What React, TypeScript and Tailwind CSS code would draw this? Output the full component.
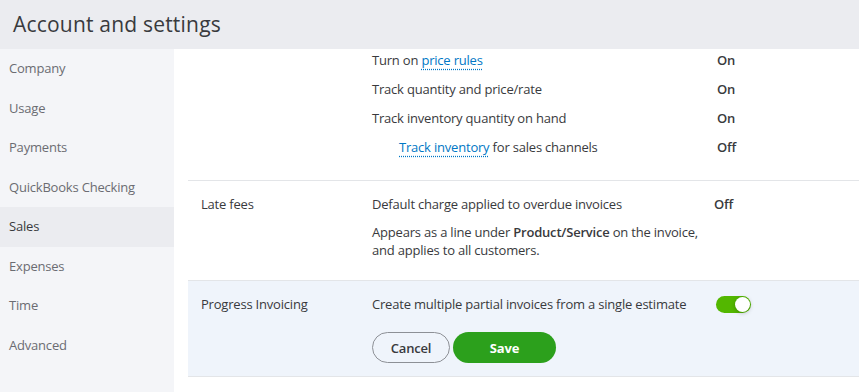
import { useState } from "react";

const navItems = [
  "Company",
  "Usage",
  "Payments",
  "QuickBooks Checking",
  "Sales",
  "Expenses",
  "Time",
  "Advanced",
];

function Link({ children }: { children: React.ReactNode }) {
  return (
    <span className="text-[#0077c5] underline decoration-dotted decoration-[#0077c5] underline-offset-[4px]">
      {children}
    </span>
  );
}

function Toggle({ on, onChange }: { on: boolean; onChange: () => void }) {
  return (
    <button
      onClick={onChange}
      className={`relative h-[17px] w-[35px] rounded-full ${on ? "bg-[#53b700]" : "bg-[#babec5]"}`}
    >
      <span
        className={`absolute top-[1px] h-[15px] w-[15px] rounded-full bg-white shadow-[0_1px_4px_rgba(0,0,0,0.25)] ${on ? "right-[1px]" : "left-[1px]"}`}
      />
    </button>
  );
}

export default function App() {
  const [progress, setProgress] = useState(true);
  const active = "Sales";

  const inventoryRows = [
    { text: <>Turn on <Link>price rules</Link></>, value: "On", indent: false },
    { text: <>Track quantity and price/rate</>, value: "On", indent: false },
    { text: <>Track inventory quantity on hand</>, value: "On", indent: false },
    { text: <><Link>Track inventory</Link> for sales channels</>, value: "Off", indent: true },
  ];

  return (
    <div className="flex h-[392px] w-[859px] flex-col overflow-hidden bg-white font-['Open_Sans',sans-serif] text-[13px] tracking-[-0.2px] text-[#393a3d]">
      <div className="flex h-[49px] shrink-0 items-center bg-[#ebecf0] pl-[13px]">
        <h1 className="text-[21px] leading-none tracking-[0.2px] text-[#393a3d]">Account and settings</h1>
      </div>

      <div className="flex min-h-0 flex-1">
        <nav className="flex w-[174px] shrink-0 flex-col bg-[#f4f5f8]">
          {navItems.map((item) => (
            <div
              key={item}
              className={`flex h-[39.5px] items-center pl-[9px] ${
                item === active ? "bg-[#ebecf0] text-[#393a3d]" : "text-[#6b6c72]"
              }`}
            >
              {item}
            </div>
          ))}
        </nav>

        <main className="flex-1 pl-[14px]">
          {/* inventory */}
          <div className="-mt-[3px] border-b border-[#e3e5e8] pb-[18px]">
            {inventoryRows.map((row, i) => (
              <div key={i} className="flex h-[29px] items-center">
                <div className="w-[184px] shrink-0" />
                <div className={`w-[345px] shrink-0 ${row.indent ? "pl-[27px]" : ""}`}>{row.text}</div>
                <div className="font-semibold">{row.value}</div>
              </div>
            ))}
          </div>

          {/* late fees */}
          <div className="flex border-b border-[#e3e5e8] pb-[21px] pt-[14px] leading-[18px]">
            <div className="w-[184px] shrink-0 pl-[13px]">Late fees</div>
            <div className="w-[342px] shrink-0">
              <div>Default charge applied to overdue invoices</div>
              <div className="mt-[10px]">
                Appears as a line under <span className="font-semibold">Product/Service</span> on the invoice,
                <br />
                and applies to all customers.
              </div>
            </div>
            <div className="font-semibold">Off</div>
          </div>

          {/* progress invoicing */}
          <div className="flex border-b border-[#e3e5e8] bg-[#eff4fb] pb-[13px] pt-[14px] leading-[18px]">
            <div className="w-[184px] shrink-0 pl-[13px]">Progress Invoicing</div>
            <div className="flex-1">
              <div className="flex items-center">
                <div className="w-[344px] shrink-0">Create multiple partial invoices from a single estimate</div>
                <Toggle on={progress} onChange={() => setProgress(!progress)} />
              </div>
              <div className="mt-[19px] flex gap-[3px]">
                <button className="h-[31px] w-[78px] rounded-full border border-[#8d9096] font-semibold text-[#393a3d]">
                  Cancel
                </button>
                <button className="h-[31px] w-[103px] rounded-full bg-[#2ca01c] font-bold text-white">
                  Save
                </button>
              </div>
            </div>
          </div>
        </main>
      </div>
    </div>
  );
}
